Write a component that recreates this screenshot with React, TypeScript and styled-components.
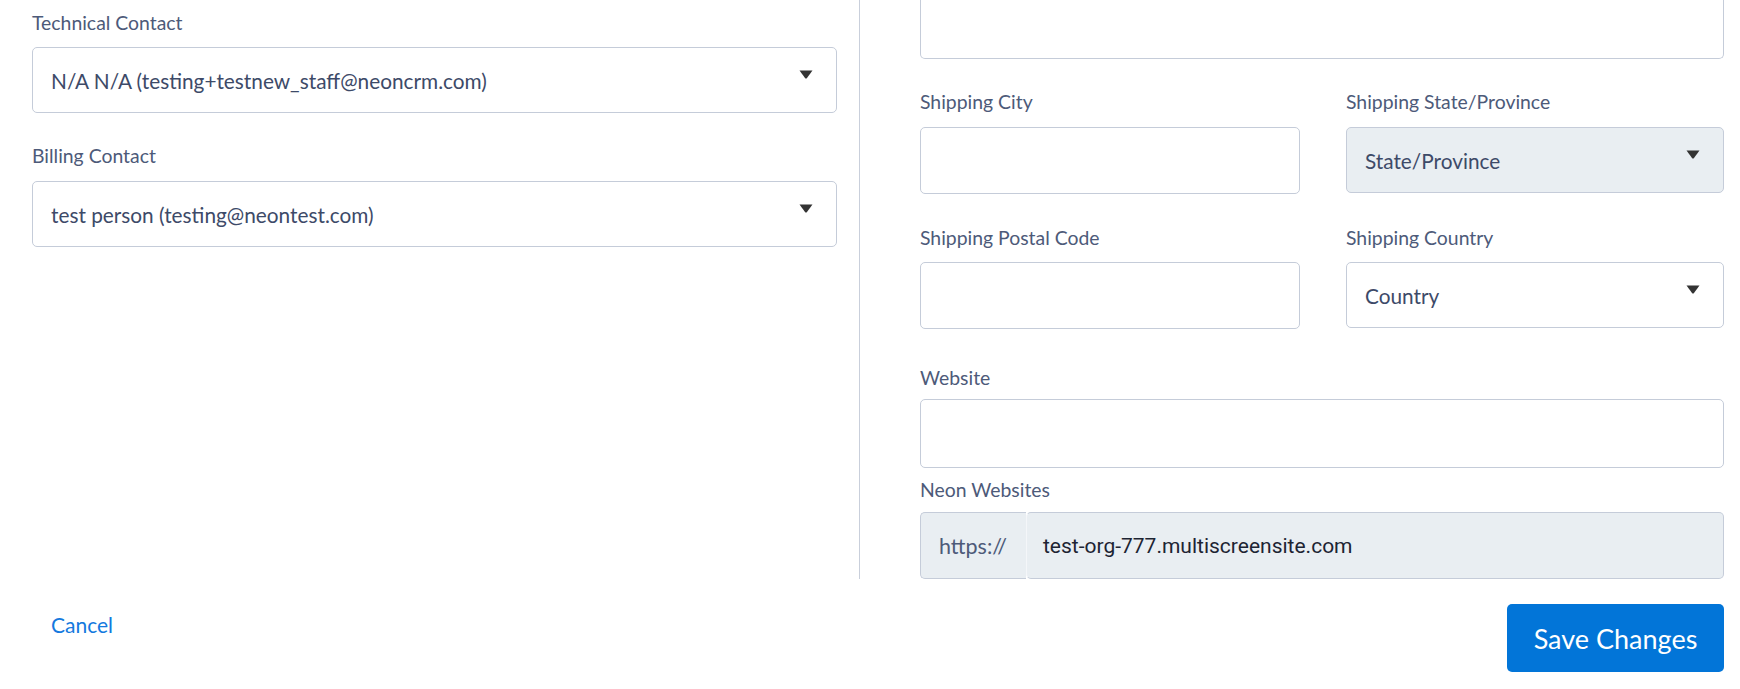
import React from "react";
import styled, { createGlobalStyle } from "styled-components";

const GlobalStyle = createGlobalStyle`
  html, body {
    margin: 0;
    padding: 0;
    background: #fff;
  }
  body {
    font-family: Lato, "Noto Sans", sans-serif;
  }
  * {
    box-sizing: border-box;
  }
`;

const Page = styled.div`
  width: 1740px;
  height: 689px;
  overflow: hidden;
  background: #fff;
`;

const Main = styled.div`
  display: grid;
  grid-template-columns: 860px 1fr;
`;

const LeftPane = styled.div`
  padding: 12px 22px 0 32px;
  border-right: 1px solid #c9cfdb;
`;

const RightPane = styled.div`
  padding: 0 16px 0 60px;
`;

const Row = styled.div`
  display: grid;
  grid-template-columns: 380px 1fr;
  column-gap: 46px;
`;

const Field = styled.div<{ $top?: number }>`
  display: flex;
  flex-direction: column;
  margin-top: ${(p) => p.$top ?? 0}px;
`;

const Label = styled.label<{ $gap?: number }>`
  display: block;
  font-size: 19.4px;
  line-height: 22px;
  color: #4d5a79;
  margin-bottom: ${(p) => p.$gap ?? 14}px;
`;

const ClippedBox = styled.div`
  height: 59px;
  border: 1px solid #c5ccd9;
  border-top: none;
  border-radius: 0 0 5px 5px;
`;

const TextInput = styled.div<{ $h?: number }>`
  height: ${(p) => p.$h ?? 68}px;
  border: 1px solid #c5ccd9;
  border-radius: 5px;
  background: #fff;
`;

const SelectBox = styled.div<{ $disabled?: boolean }>`
  height: 66px;
  display: flex;
  align-items: center;
  justify-content: space-between;
  padding: 0 23px 0 18px;
  border: 1px solid #c5ccd9;
  border-radius: 5px;
  background: ${(p) => (p.$disabled ? "#e9eef2" : "#fff")};
  font-size: 20.8px;
  color: #3d4a68;
`;

const Caret = styled.svg`
  width: 14px;
  height: 9px;
  margin-bottom: 12px;
  flex: none;
`;

const InputGroup = styled.div`
  display: flex;
  height: 67px;
`;

const Addon = styled.div`
  width: 106px;
  display: flex;
  align-items: center;
  padding-left: 18px;
  background: #e9eef2;
  border: 1px solid #c5ccd9;
  border-right: none;
  border-radius: 5px 0 0 5px;
  font-size: 21.5px;
  color: #4d5a79;
`;

const GroupInput = styled.div`
  flex: 1;
  display: flex;
  align-items: center;
  padding-left: 16px;
  background: #e9eef2;
  border: 1px solid #c5ccd9;
  border-left: 1px solid #f4f6f9;
  border-radius: 5px;
  font-family: Roboto, "Liberation Sans", Arial, sans-serif;
  font-size: 21px;
  color: #1d2433;
`;

const Footer = styled.div`
  display: flex;
  justify-content: space-between;
  align-items: flex-start;
  padding: 25px 16px 0 32px;
`;

const CancelLink = styled.a`
  padding: 9px 19px;
  font-size: 21px;
  line-height: 24px;
  color: #1479de;
  text-decoration: none;
  cursor: pointer;
`;

const SaveButton = styled.button`
  height: 68px;
  width: 217px;
  border: none;
  border-radius: 5px;
  background: #0275d8;
  color: #fff;
  font-family: Lato, "Noto Sans", sans-serif;
  font-size: 27px;
  cursor: pointer;
`;

const DownCaret = () => (
  <Caret viewBox="0 0 14 9">
    <path d="M0.5 0.5 H13.5 L7.8 8.2 Q7 9 6.2 8.2 Z" fill="#333" />
  </Caret>
);

const Select = ({ value, disabled }: { value: string; disabled?: boolean }) => (
  <SelectBox $disabled={disabled}>
    <span>{value}</span>
    <DownCaret />
  </SelectBox>
);

export default function App() {
  return (
    <Page>
      <GlobalStyle />
      <Main>
        <LeftPane>
          <Field>
            <Label $gap={13}>Technical Contact</Label>
            <Select value="N/A N/A (testing+testnew_staff@neoncrm.com)" />
          </Field>
          <Field $top={32}>
            <Label>Billing Contact</Label>
            <Select value="test person (testing@neontest.com)" />
          </Field>
        </LeftPane>

        <RightPane>
          <ClippedBox />
          <Row>
            <Field $top={32}>
              <Label>Shipping City</Label>
              <TextInput $h={67} />
            </Field>
            <Field $top={32}>
              <Label>Shipping State/Province</Label>
              <Select value="State/Province" disabled />
            </Field>
          </Row>
          <Row>
            <Field $top={33}>
              <Label $gap={13}>Shipping Postal Code</Label>
              <TextInput $h={67} />
            </Field>
            <Field $top={33}>
              <Label $gap={13}>Shipping Country</Label>
              <Select value="Country" />
            </Field>
          </Row>
          <Field $top={38}>
            <Label $gap={10}>Website</Label>
            <TextInput $h={69} />
          </Field>
          <Field $top={11}>
            <Label $gap={11}>Neon Websites</Label>
            <InputGroup>
              <Addon>https://</Addon>
              <GroupInput>test-org-777.multiscreensite.com</GroupInput>
            </InputGroup>
          </Field>
        </RightPane>
      </Main>

      <Footer>
        <CancelLink>Cancel</CancelLink>
        <SaveButton>Save Changes</SaveButton>
      </Footer>
    </Page>
  );
}
